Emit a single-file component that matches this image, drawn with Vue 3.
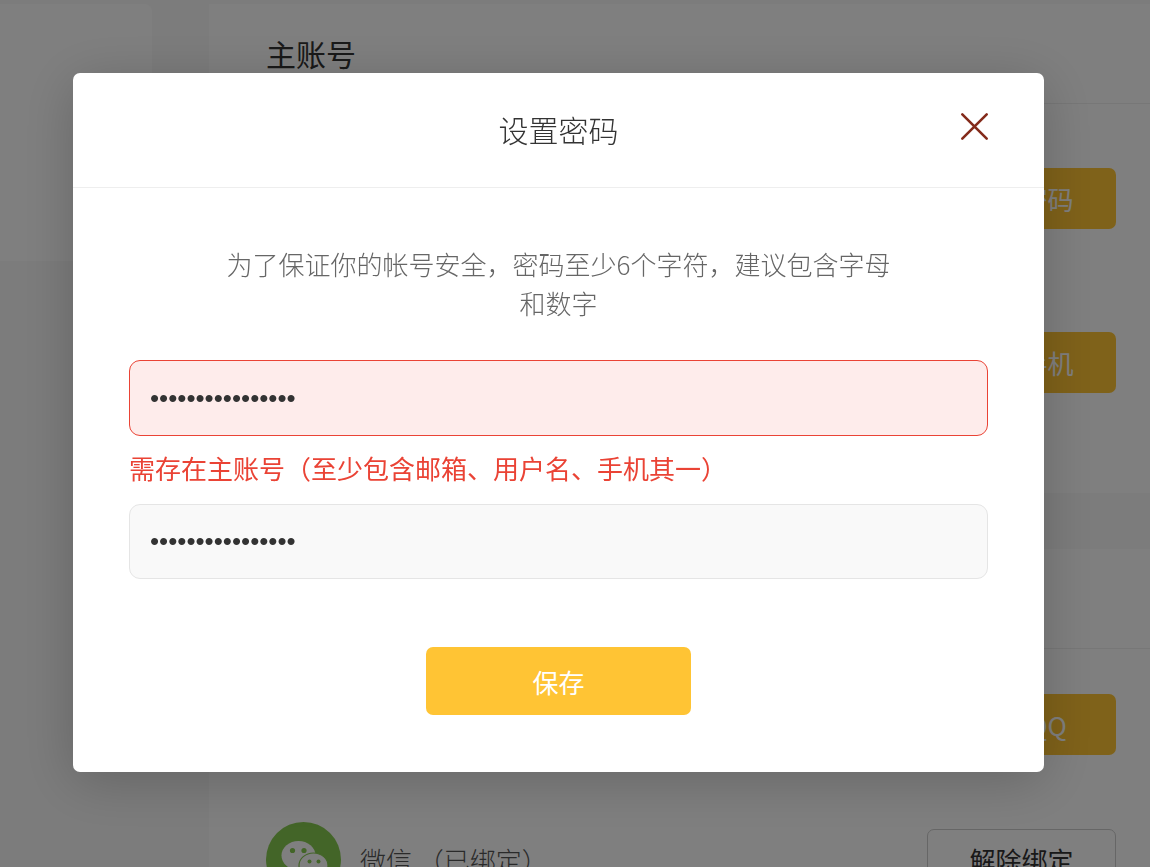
<script setup>
import { ref } from 'vue'

const password = ref('abcdefgh12345678')
const confirmPassword = ref('abcdefgh12345678')
const open = ref(true)
</script>

<template>
  <div class="page">
    <aside class="side"></aside>
    <main class="content">
      <section class="card">
        <h2 class="card-title">主账号</h2>
        <div class="rows">
          <div class="row row-tall"><button class="btn" type="button">设置密码</button></div>
          <div class="row row-tall"><button class="btn" type="button">绑定手机</button></div>
        </div>
      </section>
      <section class="card card-social">
        <h2 class="card-title"></h2>
        <div class="rows">
          <div class="row"><button class="btn" type="button">绑定QQ</button></div>
          <div class="row">
            <div class="account">
              <svg class="wechat" viewBox="0 0 75 75" aria-hidden="true">
                <circle cx="37.500" cy="37.500" r="37.500" fill="#86ca50" />
                <ellipse cx="32.500" cy="33.500" rx="17" ry="14.500" fill="#fff" />
                <path d="M23 44l-3 7 8-4z" fill="#fff" />
                <circle cx="26.500" cy="28.500" r="2.600" fill="#86ca50" />
                <circle cx="38" cy="28.500" r="2.600" fill="#86ca50" />
                <ellipse cx="47.500" cy="43.500" rx="14.500" ry="12.500" fill="#fff" stroke="#86ca50" stroke-width="1.200" />
                <path d="M52 54l5 5-1-7z" fill="#fff" />
                <circle cx="43.500" cy="39.500" r="2" fill="#86ca50" />
                <circle cx="52.500" cy="39.500" r="2" fill="#86ca50" />
              </svg>
              <span>微信 （已绑定）</span>
            </div>
            <button class="btn btn-plain" type="button">解除绑定</button>
          </div>
        </div>
      </section>
    </main>
  </div>

  <div v-if="open" class="mask">
    <div class="dialog" role="dialog" aria-modal="true" aria-labelledby="dialog-title">
      <header class="dialog-head">
        <h1 id="dialog-title" class="dialog-title">设置密码</h1>
        <button class="close" type="button" aria-label="关闭" @click="open = false">
          <svg viewBox="0 0 27 27" aria-hidden="true">
            <path d="M1.300 1.300L25.700 25.700M25.700 1.300L1.300 25.700" fill="none" stroke="#842b1b" stroke-width="2.600" stroke-linecap="round" />
          </svg>
        </button>
      </header>
      <form class="dialog-body" @submit.prevent>
        <p class="hint">为了保证你的帐号安全，密码至少6个字符，建议包含字母和数字</p>
        <input v-model="password" class="field field-error" type="password" aria-label="密码" aria-invalid="true" aria-describedby="password-error" />
        <p id="password-error" class="error">需存在主账号（至少包含邮箱、用户名、手机其一）</p>
        <input v-model="confirmPassword" class="field" type="password" aria-label="确认密码" />
        <button class="save" type="submit">保存</button>
      </form>
    </div>
  </div>
</template>

<style>
body {
  background: #f9f9f9;
}
</style>

<style scoped>
.page,
.mask {
  box-sizing: border-box;
  font-family: "Noto Sans CJK SC", sans-serif;
  font-size: 26px;
  color: #333;
}
.page *,
.mask * {
  box-sizing: border-box;
}
button,
input {
  font-family: inherit;
  font-size: inherit;
  margin: 0;
}
.page {
  display: flex;
  align-items: flex-start;
  gap: 57px;
  height: 100vh;
  padding-top: 4px;
  overflow: hidden;
}
.side {
  flex: 0 0 152px;
  height: 257px;
  background: #fff;
  border-radius: 0 8px 8px 0;
}
.content {
  flex: 1;
  display: flex;
  flex-direction: column;
  gap: 56px;
}
.card {
  background: #fff;
  padding-bottom: 49px;
}
.card-title {
  height: 100px;
  margin: 0;
  padding: 0 57px;
  border-bottom: 1px solid #eee;
  font-size: 30px;
  font-weight: 400;
  line-height: 98px;
}
.rows {
  padding: 12px 34px 0 57px;
}
.card-social .rows {
  padding-top: 8px;
}
.row {
  display: flex;
  align-items: center;
  height: 135px;
}
.row-tall {
  height: 164px;
}
.account {
  display: flex;
  align-items: center;
  gap: 19px;
  font-weight: 300;
  line-height: 36px;
  color: #555;
}
.wechat {
  width: 75px;
  height: 75px;
}
.btn {
  width: 189px;
  height: 61px;
  margin-left: auto;
  padding: 0;
  border: 0;
  border-radius: 7px;
  background: #ffc434;
  color: #fff;
}
.btn-plain {
  border: 1px solid #ccc;
  background: #fff;
  color: #333;
}
.mask {
  position: fixed;
  inset: 0;
  padding: 73px 106px 0 73px;
  background: rgba(0, 0, 0, 0.5);
}
.dialog {
  background: #fff;
  border-radius: 7px;
  box-shadow: 0 9px 54px rgba(0, 0, 0, 0.2);
}
.dialog-head {
  display: grid;
  grid-template-columns: 1fr auto 1fr;
  align-items: start;
  padding: 40px 56px 42px;
  border-bottom: 1px solid #eee;
}
.dialog-title {
  grid-column: 2;
  margin: 0;
  font-size: 30px;
  font-weight: 300;
  line-height: 32px;
}
.close {
  justify-self: end;
  width: 27px;
  height: 27px;
  padding: 0;
  border: 0;
  background: none;
}
.close svg {
  display: block;
  width: 100%;
  height: 100%;
  overflow: visible;
}
.dialog-body {
  display: flex;
  flex-direction: column;
  padding: 56px 56px 57px;
}
.hint {
  margin: 0 0 38px;
  padding: 0 90px;
  font-weight: 300;
  line-height: 39px;
  text-align: center;
  color: #666;
}
.field {
  width: 100%;
  height: 75px;
  padding: 0 20px;
  border: 1px solid #e5e5e5;
  border-radius: 11px;
  outline: 0;
  background: #f9f9f9;
  color: #333;
  font-family: "Liberation Sans", sans-serif;
}
.field-error {
  height: 76px;
  border-color: #ea4335;
  background: #feeceb;
}
.error {
  margin: 0 0 4px;
  line-height: 64px;
  color: #ea4335;
}
.save {
  align-self: center;
  width: 265px;
  height: 68px;
  margin-top: 68px;
  padding: 0;
  border: 0;
  border-radius: 7px;
  background: #ffc434;
  color: #fff;
}
</style>
